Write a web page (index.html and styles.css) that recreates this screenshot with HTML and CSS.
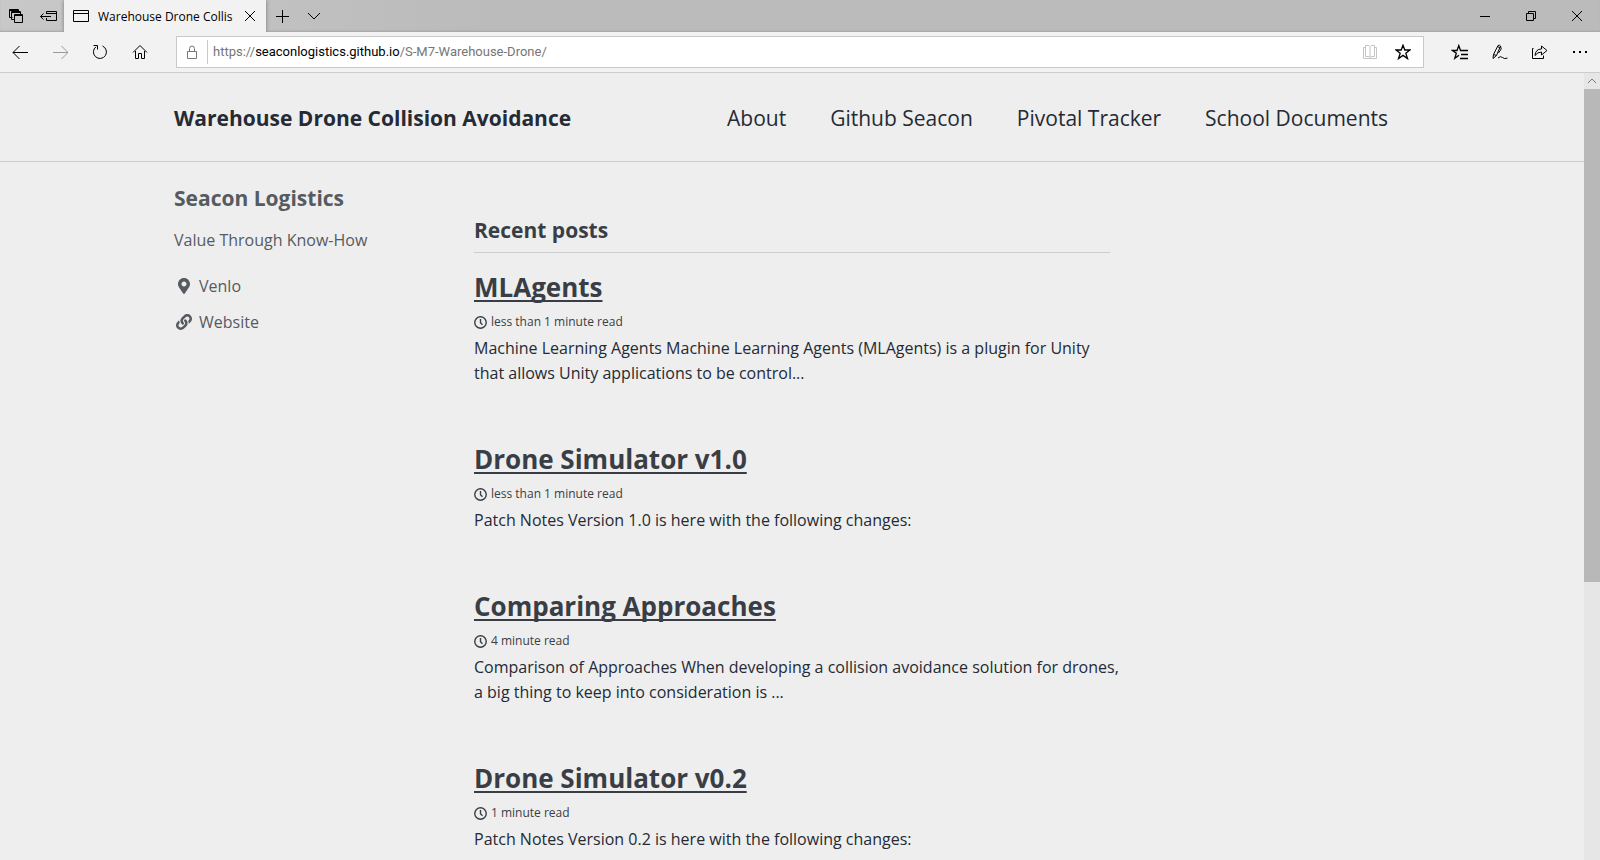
FILE: index.html
```
<!DOCTYPE html>
<html lang="en">
<head>
<meta charset="utf-8">
<title>Warehouse Drone Collision Avoidance</title>
<link rel="stylesheet" href="styles.css">
</head>
<body>
<div class="tabbar">
  <button class="tab-tool" aria-label="Tabs you've set aside"><svg width="16" height="16" viewBox="0 0 16 16"><path d="M4.500 9.500H1.500V1.500H10.500V4M6.500 11.500H3.500V3.500H12.500V6M1.500 2.500H10.500M3.500 4.500H12.500M6.500 6.500H14.500V14.500H6.500ZM6.500 7.500H14.500"/></svg></button>
  <button class="tab-tool" aria-label="Set these tabs aside"><svg width="18" height="16" viewBox="0 0 18 16"><path d="M7.500 6V3.500H17.500V12.500H7.500V10M7.500 5.500H17.500M1.500 8.500H12M4.500 5.500L1.500 8.500L4.500 11.500"/></svg></button>
  <div class="tab">
    <svg width="18" height="16" viewBox="0 0 18 16"><path d="M1.500 2.500H16.500V13.500H1.500ZM1.500 5.500H16.500"/></svg>
    <span class="tab-title">Warehouse Drone Collis</span>
    <button class="tab-close" aria-label="Close tab"><svg width="12" height="12" viewBox="0 0 12 12"><path d="M1 1L11 11M11 1L1 11"/></svg></button>
  </div>
  <button class="tab-tool" aria-label="New tab"><svg width="14" height="14" viewBox="0 0 14 14"><path d="M7.500 1V14M1 7.500H14"/></svg></button>
  <button class="tab-tool" aria-label="Show tab previews"><svg width="14" height="14" viewBox="0 0 14 14"><path d="M1 4L7 10L13 4"/></svg></button>
  <div class="window-buttons">
    <button aria-label="Minimize"><svg width="12" height="12" viewBox="0 0 12 12"><path d="M1 6.500H11"/></svg></button>
    <button aria-label="Restore"><svg width="12" height="12" viewBox="0 0 12 12"><path d="M1.500 3.500H8.500V10.500H1.500ZM3.500 3.500V1.500H10.500V8.500H8.500"/></svg></button>
    <button aria-label="Close"><svg width="12" height="12" viewBox="0 0 12 12"><path d="M1 1L11 11M11 1L1 11"/></svg></button>
  </div>
</div>
<div class="toolbar">
  <div class="tools">
    <button aria-label="Back"><svg width="16" height="16" viewBox="0 0 16 16"><path d="M1 8.500H16M7.500 2L1 8.500L7.500 15"/></svg></button>
    <button aria-label="Forward" class="faded"><svg width="16" height="16" viewBox="0 0 16 16"><path d="M1 8.500H16M9.500 2L16 8.500L9.500 15"/></svg></button>
    <button aria-label="Refresh"><svg width="16" height="16" viewBox="0 0 16 16"><path d="M10.500 2A6.500 6.500 0 1 1 4 2.800M1.500 1.500H5.500V5.500"/></svg></button>
    <button aria-label="Home"><svg width="16" height="16" viewBox="0 0 16 16"><path d="M1 8.500L8 1.500L15 8.500M3.500 7V14.500H6.500V9.500H9.500V14.500H12.500V7"/></svg></button>
  </div>
  <form class="address">
    <svg class="lock" width="12" height="16" viewBox="0 0 12 16"><path d="M1.500 7.500H10.500V14.500H1.500ZM3.500 7.500V4.500A2.500 2.500 0 0 1 8.500 4.500V7.500"/></svg>
    <a class="url" href="https://seaconlogistics.github.io/S-M7-Warehouse-Drone/">https://<span class="host">seaconlogistics.github.io</span>/S-M7-Warehouse-Drone/</a>
    <button type="button" aria-label="Reading view" class="dim"><svg width="16" height="16" viewBox="0 0 16 16"><path d="M3.500 3V1.500H7L8 2.500L9 1.500H12.500V3M3.500 2V12.500H7L8 13.500L9 12.500H12.500V2M8 2.500V14M3.500 3.500H1.500V14.500H14.500V3.500H12.500"/></svg></button>
    <button type="button" aria-label="Add to favorites"><svg width="16" height="16" viewBox="0 0 16 16"><path class="bold" d="M8 1.200L9.800 6H15L10.800 9.200L12.500 14.600L8 11.400L3.500 14.600L5.200 9.200L1 6H6.200Z"/></svg></button>
  </form>
  <div class="tools">
    <button aria-label="Hub"><svg width="18" height="16" viewBox="0 0 18 16"><path class="bold" d="M11 6.500H9.500L7.800 1.600L6 6.500H1.500L5.300 9.300L3.800 14.300L8 11.300M9 6.500H17M10 10.500H17M9 14.500H17"/></svg></button>
    <button aria-label="Web notes"><svg width="18" height="16" viewBox="0 0 18 16"><path d="M2 14.500L2.500 10.500L7 1.500Q8.500 .5 9.500 2L5.500 11.500L2 14.500M9.500 2L10.200 5L7.500 9M6.500 2.500L8.800 3.700M2.500 10.500L5.500 11.500M7 14Q9.500 11.500 11.500 13.500T16.500 14"/></svg></button>
    <button aria-label="Share"><svg width="18" height="16" viewBox="0 0 18 16"><path d="M2.500 4.500H1.500V14.500H12.500V11.500M4 11.500Q4.500 5 10.500 5V2L16 6.500L10.500 11V8Q6.500 8 4 11.500Z"/></svg></button>
    <button aria-label="More"><svg width="16" height="16" viewBox="0 0 16 16"><path class="dots" d="M1 7H3V9H1ZM7 7H9V9H7ZM13 7H15V9H13Z"/></svg></button>
  </div>
</div>
<div class="viewport">
  <div class="page">
    <header class="masthead">
      <div class="wrap masthead-inner">
        <a class="site-title" href="#">Warehouse Drone Collision Avoidance</a>
        <nav class="site-nav">
          <a href="#">About</a>
          <a href="#">Github Seacon</a>
          <a href="#">Pivotal Tracker</a>
          <a href="#">School Documents</a>
        </nav>
      </div>
    </header>
    <div class="wrap columns">
      <aside class="author">
        <h3>Seacon Logistics</h3>
        <p>Value Through Know-How</p>
        <ul>
          <li><svg width="20" height="16" viewBox="-64 0 640 512"><path class="solid" transform="translate(64 0)" d="M172.268 501.670C26.970 291.031 0 269.413 0 192 0 85.961 85.961 0 192 0s192 85.961 192 192c0 77.413-26.970 99.031-172.268 309.670-9.535 13.774-29.930 13.773-39.464 0zM192 272c44.183 0 80-35.817 80-80s-35.817-80-80-80-80 35.817-80 80 35.817 80 80 80z"/></svg>Venlo</li>
          <li><a href="#"><svg width="20" height="16" viewBox="-64 0 640 512"><path class="solid" d="M326.612 185.391c59.747 59.809 58.927 155.698.360 214.590-.110.120-.240.250-.360.370l-67.200 67.200c-59.270 59.270-155.699 59.262-214.960 0-59.270-59.260-59.270-155.700 0-214.960l37.106-37.106c9.840-9.840 26.786-3.300 27.294 10.606.648 17.722 3.826 35.527 9.690 52.721 1.986 5.822.567 12.262-3.783 16.612l-13.087 13.087c-28.026 28.026-28.905 73.660-1.155 101.960 28.024 28.579 74.086 28.749 102.325.510l67.200-67.190c28.191-28.191 28.073-73.757 0-101.830-3.701-3.694-7.429-6.564-10.341-8.569a16.037 16.037 0 0 1-6.947-12.606c-.396-10.567 3.348-21.456 11.698-29.806l21.054-21.055c5.521-5.521 14.182-6.199 20.584-1.731a152.482 152.482 0 0 1 20.522 17.197zM467.547 44.449c-59.261-59.262-155.690-59.270-214.960 0l-67.200 67.200c-.120.120-.250.250-.360.370-58.566 58.892-59.387 154.781.360 214.590a152.454 152.454 0 0 0 20.521 17.196c6.402 4.468 15.064 3.789 20.584-1.731l21.054-21.055c8.350-8.350 12.094-19.239 11.698-29.806a16.037 16.037 0 0 0-6.947-12.606c-2.912-2.005-6.640-4.875-10.341-8.569-28.073-28.073-28.191-73.639 0-101.830l67.200-67.190c28.239-28.239 74.300-28.069 102.325.510 27.750 28.300 26.872 73.934-1.155 101.960l-13.087 13.087c-4.350 4.350-5.769 10.790-3.783 16.612 5.864 17.194 9.042 34.999 9.690 52.721.509 13.906 17.454 20.446 27.294 10.606l37.106-37.106c59.271-59.259 59.271-155.699.001-214.959z"/></svg>Website</a></li>
        </ul>
      </aside>
      <main class="posts">
        <h3 class="subtitle">Recent posts</h3>
        <article>
          <h2><a href="#">MLAgents</a></h2>
          <p class="meta"><svg width="13" height="13" viewBox="0 0 13 13"><circle cx="6.500" cy="6.500" r="5.750"/><path d="M6.500 3V6.800L8.500 8.800"/></svg>less than 1 minute read</p>
          <p class="excerpt">Machine Learning Agents Machine Learning Agents (MLAgents) is a plugin for Unity that allows Unity applications to be control...</p>
        </article>
        <article>
          <h2><a href="#">Drone Simulator v1.0</a></h2>
          <p class="meta"><svg width="13" height="13" viewBox="0 0 13 13"><circle cx="6.500" cy="6.500" r="5.750"/><path d="M6.500 3V6.800L8.500 8.800"/></svg>less than 1 minute read</p>
          <p class="excerpt">Patch Notes Version 1.0 is here with the following changes:</p>
        </article>
        <article>
          <h2><a href="#">Comparing Approaches</a></h2>
          <p class="meta"><svg width="13" height="13" viewBox="0 0 13 13"><circle cx="6.500" cy="6.500" r="5.750"/><path d="M6.500 3V6.800L8.500 8.800"/></svg>4 minute read</p>
          <p class="excerpt">Comparison of Approaches When developing a collision avoidance solution for drones, a big thing to keep into consideration is ...</p>
        </article>
        <article>
          <h2><a href="#">Drone Simulator v0.2</a></h2>
          <p class="meta"><svg width="13" height="13" viewBox="0 0 13 13"><circle cx="6.500" cy="6.500" r="5.750"/><path d="M6.500 3V6.800L8.500 8.800"/></svg>1 minute read</p>
          <p class="excerpt">Patch Notes Version 0.2 is here with the following changes:</p>
        </article>
      </main>
    </div>
  </div>
  <div class="scrollbar">
    <svg width="16" height="16" viewBox="0 0 16 16"><path d="M4 10L8 6L12 10"/></svg>
    <div class="thumb"></div>
  </div>
</div>
</body>
</html>
```
FILE: styles.css
```
* { box-sizing: border-box; }

body {
  margin: 0;
  height: 100vh;
  display: flex;
  flex-direction: column;
  overflow: hidden;
  background: #eeeeee;
  font-family: "Open Sans", "Noto Sans", sans-serif;
  color: #252a34;
}

h2, h3, p, ul { margin: 0; padding: 0; }
a { color: inherit; text-decoration: none; }
svg { flex: none; fill: none; stroke: currentColor; }
.solid, .dots { fill: currentColor; stroke: none; }
.bold { stroke-width: 1.3; }

button {
  display: flex;
  align-items: center;
  justify-content: center;
  flex: none;
  padding: 0;
  border: 0;
  background: none;
  color: #000;
}

/* Browser chrome */
.tabbar {
  display: flex;
  flex: none;
  height: 32px;
  background: linear-gradient(to right, #c8c8c8, #bbbbbb 30%, #bbbbbb);
  box-shadow: inset 0 -2px 2px -1px #a4a4a4;
}
.tab-tool { width: 32px; }
.tab {
  display: flex;
  align-items: center;
  width: 202px;
  padding: 0 8px;
  gap: 8px;
  background: #f2f2f2;
  box-shadow: 0 0 4px #777;
  clip-path: inset(0 -4px);
  font-size: 12px;
  color: #000;
}
.tab-title { flex: 1; white-space: nowrap; }
.tab-close { width: 18px; height: 32px; }
.window-buttons { display: flex; margin-left: auto; }
.window-buttons button { width: 46px; }

.toolbar {
  display: flex;
  align-items: center;
  flex: none;
  height: 41px;
  gap: 16px;
  background: #f2f2f2;
  border-bottom: 1px solid #cccccc;
}
.tools { display: flex; }
.tools button { width: 40px; height: 40px; }
.tools .faded { color: #999; }
.address {
  display: flex;
  align-items: center;
  flex: 1;
  height: 32px;
  padding: 0 4px 0 9px;
  background: #fff;
  border: 1px solid #c8c8c8;
}
.address button { width: 33px; height: 30px; }
.address .dim { color: #c4c4c4; }
.lock { color: #777; }
.url {
  flex: 1;
  margin-left: 9px;
  padding-left: 5px;
  border-left: 1px solid #c8c8c8;
  font-family: Roboto, "Open Sans", sans-serif;
  font-size: 13px;
  line-height: 24px;
  color: #767676;
}
.host { color: #000; }

/* Site */
.viewport { display: flex; flex: 1; min-height: 0; }
.page { flex: 1; overflow: hidden; }
.wrap { max-width: 1280px; margin: 0 auto; padding: 0 22px; }

.masthead { border-bottom: 1px solid #cccccc; }
.masthead-inner {
  display: flex;
  align-items: center;
  justify-content: space-between;
  height: 88px;
  padding-top: 2px;
  padding-right: 44px;
  font-size: 21px;
}
.site-title { font-weight: 700; }
.site-nav { display: flex; gap: 44px; }

.columns { display: flex; }
.author { width: 300px; padding-top: 19px; color: #565a61; }
.author h3 { font-size: 21px; line-height: 34px; }
.author p { margin-top: 13px; font-size: 16px; line-height: 25px; }
.author ul { margin-top: 15px; list-style: none; font-size: 16px; }
.author li, .author li a { display: flex; align-items: center; gap: 5px; height: 36px; }

.posts { width: 636px; padding-top: 50px; color: #393e46; }
.subtitle {
  padding-bottom: 4px;
  margin-bottom: 17px;
  border-bottom: 1px solid #cccccc;
  font-size: 21px;
  line-height: 36px;
}
article { margin-bottom: 56px; }
article h2 { font-size: 26px; line-height: 34px; }
article h2 a {
  text-decoration: underline;
  text-decoration-thickness: 2px;
  text-underline-offset: 3px;
  text-decoration-skip-ink: none;
}
.meta {
  display: flex;
  align-items: center;
  gap: 4px;
  margin: 8px 0 4px;
  font-size: 12px;
  line-height: 20px;
}
.meta svg { stroke-width: 1.4; }
.excerpt { margin-right: -13px; font-size: 16px; line-height: 25px; color: #252a34; }

.scrollbar { width: 16px; flex: none; background: #e6e6e6; color: #777; }
.scrollbar svg { display: block; }
.thumb { height: 62.7%; background: #b8b8b8; }
```
